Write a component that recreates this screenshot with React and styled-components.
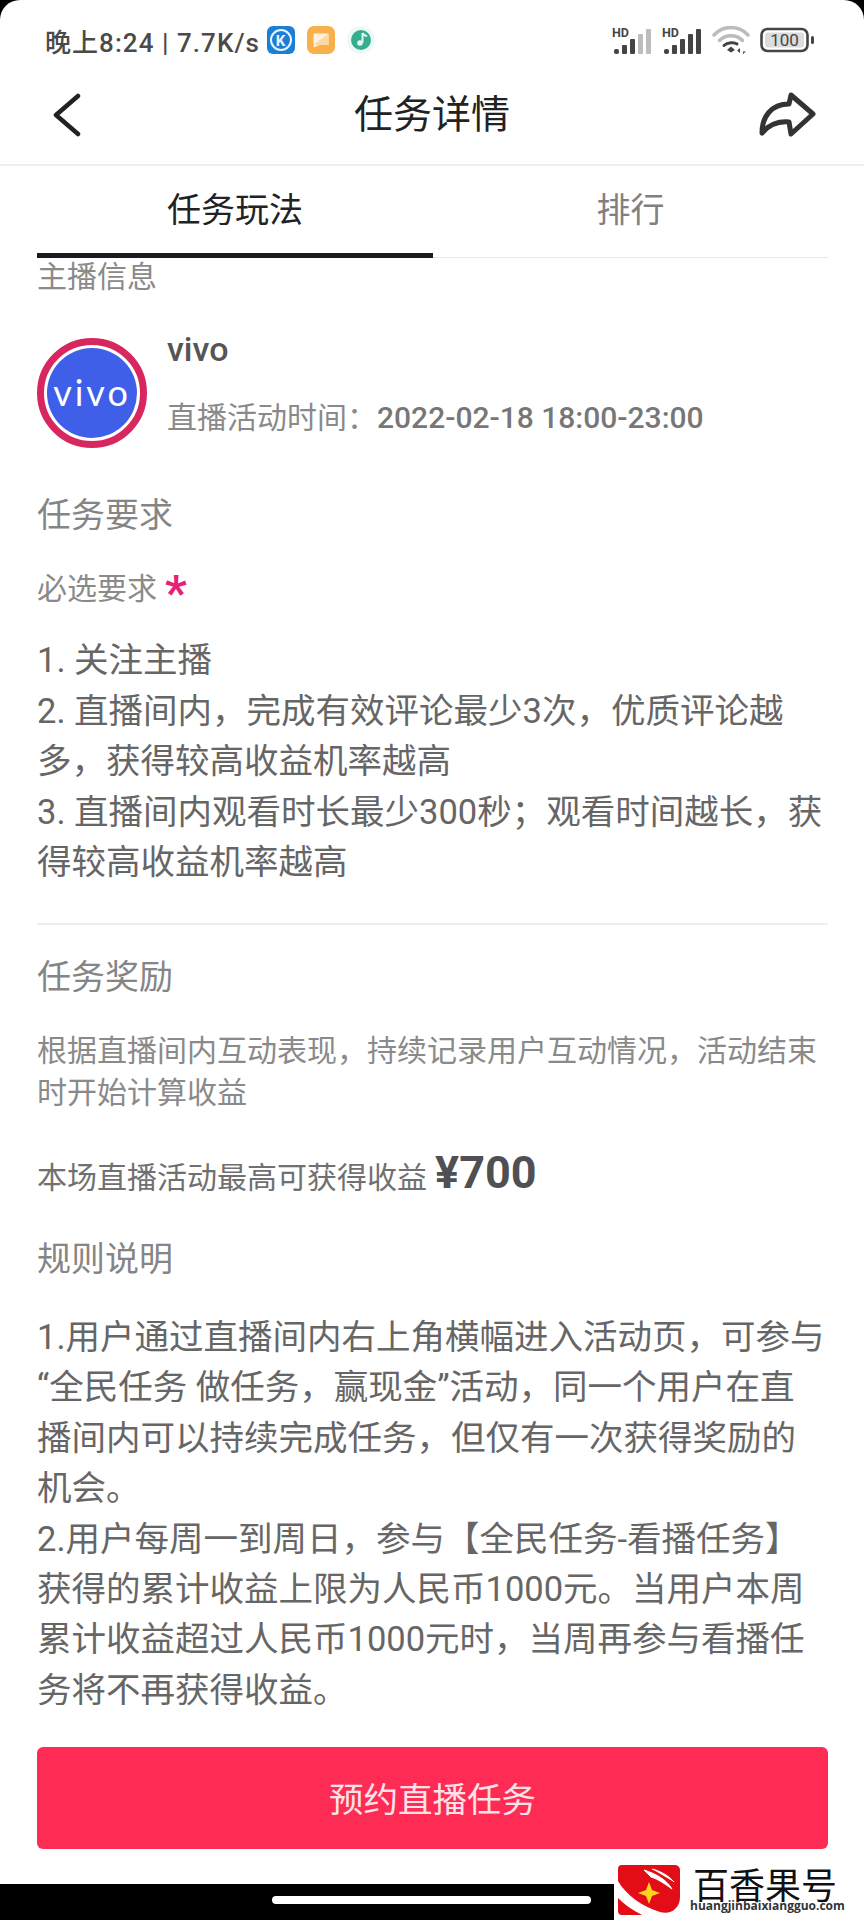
import React from "react";
import styled, { createGlobalStyle } from "styled-components";

const Global = createGlobalStyle`
  html, body { margin: 0; padding: 0; background: #000; }
  body { font-family: Roboto, "Noto Sans CJK SC", sans-serif; }
`;

const Screen = styled.div`
  position: relative;
  width: 864px;
  height: 1920px;
  background: #000;
  overflow: hidden;
  display: flex;
  flex-direction: column;
`;

const Main = styled.div`
  height: 1884px;
  background: #fff;
  border-radius: 20px 20px 0 0;
  display: flex;
  flex-direction: column;
`;

const StatusBar = styled.div`
  height: 80px;
  box-sizing: border-box;
  padding: 0 50px 0 45px;
  display: flex;
  align-items: center;
  justify-content: space-between;
  color: #4a4a4a;
`;

const StatusLeft = styled.div`
  display: flex;
  align-items: center;
  font-size: 26px;
  font-weight: 500;
  letter-spacing: 1.05px;
  white-space: nowrap;
`;

const StatusIcons = styled.div`
  display: flex;
  align-items: center;
  gap: 12px;
  margin-left: 7px;
`;

const StatusRight = styled.div`
  display: flex;
  align-items: center;
  gap: 10px;
`;

const Header = styled.div`
  height: 86px;
  box-sizing: border-box;
  padding: 0 47px 15px;
  display: grid;
  grid-template-columns: 1fr auto 1fr;
  align-items: center;
  border-bottom: 2px solid #eeeeee;
`;

const HeaderEnd = styled.div`
  display: flex;
  justify-content: ${p => (p.$right ? "flex-end" : "flex-start")};
  padding-left: ${p => (p.$right ? 0 : 5)}px;
`;

const Title = styled.div`
  font-size: 39px;
  line-height: 50px;
  color: #222;
`;

const Tabs = styled.div`
  margin: 0 36px 0 37px;
  height: 92px;
  box-sizing: border-box;
  display: grid;
  grid-template-columns: 396px 1fr;
  border-bottom: 1px solid #e8e8e8;
`;

const Tab = styled.div`
  display: flex;
  align-items: center;
  justify-content: center;
  height: 92px;
  box-sizing: border-box;
  padding-bottom: 4px;
  font-size: 34px;
  color: ${p => (p.$active ? "#222" : "#808080")};
  border-bottom: 5px solid ${p => (p.$active ? "#1a1a22" : "transparent")};
`;

const Content = styled.div`
  flex: 1;
  display: flex;
  flex-direction: column;
  padding: 0 36px 0 37px;
`;

const Small = styled.div`
  font-size: 30px;
  line-height: ${p => p.$lh || 40}px;
  margin-top: ${p => p.$mt || 0}px;
  color: ${p => p.$color || "#8a8a8a"};
`;

const Heading = styled.div`
  font-size: 34px;
  line-height: 44px;
  margin-top: ${p => p.$mt}px;
  color: #858585;
`;

const HostRow = styled.div`
  display: flex;
  gap: 20px;
  margin-top: 33px;
`;

const AvatarRing = styled.div`
  width: 110px;
  height: 110px;
  margin-top: 9px;
  box-sizing: border-box;
  border-radius: 50%;
  border: 7px solid #d8275f;
  padding: 3px;
`;

const AvatarDisc = styled.div`
  width: 100%;
  height: 100%;
  border-radius: 50%;
  background: #3f5fe8;
  display: flex;
  align-items: center;
  justify-content: center;
  color: #fff;
  font-family: Lato, sans-serif;
  font-size: 36px;
  font-weight: 400;
  letter-spacing: 3px;
  padding-bottom: 3px;
  box-sizing: border-box;
`;

const HostInfo = styled.div`
  display: flex;
  flex-direction: column;
`;

const HostName = styled.div`
  font-size: 34px;
  font-weight: 500;
  line-height: 40px;
  color: #555;
`;

const HostTime = styled.div`
  font-size: 30px;
  line-height: 40px;
  margin-top: 29px;
  color: #8a8a8a;
  white-space: nowrap;
`;

const HostDate = styled.span`
  font-size: 30px;
  font-weight: 500;
  color: #777;
`;

const Star = styled.span`
  color: #e91e78;
  font-size: 48px;
  font-weight: 700;
  line-height: 30px;
  vertical-align: -10px;
  margin-left: 8px;
`;

const Body = styled.div`
  font-size: 34.5px;
  line-height: ${p => p.$lh}px;
  margin-top: ${p => p.$mt}px;
  color: #666;
`;

const Divider = styled.div`
  height: 2px;
  margin-top: 35px;
  background: #eeeeee;
`;

const Reward = styled.div`
  height: 60px;
  margin-top: 31px;
  display: flex;
  align-items: center;
  font-size: 30px;
  color: #707070;
`;

const Amount = styled.span`
  font-size: 45px;
  font-weight: 700;
  color: #505054;
  margin-left: 8px;
  padding-bottom: 4px;
`;

const Action = styled.div`
  height: 102px;
  margin-top: 32px;
  flex: none;
  box-sizing: border-box;
  padding-bottom: 3px;
  border-radius: 6px;
  background: #fe2c55;
  color: #fde3e8;
  font-size: 34.5px;
  display: flex;
  align-items: center;
  justify-content: center;
`;

const NavBar = styled.div`
  height: 36px;
  display: flex;
  align-items: flex-start;
  padding-left: 272px;
`;

const HomeBar = styled.div`
  margin-top: 12px;
  width: 319px;
  height: 8px;
  border-radius: 4px;
  background: #fff;
`;

const Watermark = styled.div`
  position: absolute;
  right: 0;
  bottom: 0;
  width: 250px;
  height: 58px;
  background: #fff;
  display: flex;
  gap: 10px;
  padding: 3px 0 0 4px;
  box-sizing: border-box;
`;

const MarkText = styled.div`
  display: flex;
  flex-direction: column;
  align-items: flex-start;
`;

const MarkName = styled.div`
  font-size: 36px;
  line-height: 32px;
  margin: 2px 0 0 3px;
  color: #111;
  font-family: "Noto Sans CJK SC", sans-serif;
  white-space: nowrap;
`;

const MarkUrl = styled.div`
  font-family: "Open Sans", sans-serif;
  font-weight: 700;
  font-size: 12px;
  line-height: 14px;
  color: #333;
  white-space: nowrap;
`;

const LogoSvg = styled.svg`
  flex: none;
`;

const KugouIcon = () => (
  <svg width="28" height="28" viewBox="0 0 28 28">
    <rect width="28" height="28" rx="6" fill="#1c7fd6" />
    <circle cx="14" cy="14" r="10" fill="none" stroke="#e9f4fd" strokeWidth="2" />
    <text x="14" y="19.5" textAnchor="middle" fontFamily="Roboto" fontWeight="700" fontSize="15" fill="#e9f4fd">K</text>
  </svg>
);

const NoteIcon = () => (
  <svg width="28" height="28" viewBox="0 0 28 28">
    <rect width="28" height="28" rx="7" fill="#f9b04a" />
    <path d="M6.5 7.5h15v11.5h-9l-6 2.5z" fill="#fdf2dd" />
    <path d="M21.5 7.5v11.5h-15z" fill="#fbd9a0" />
  </svg>
);

const MusicIcon = () => (
  <svg width="28" height="28" viewBox="0 0 28 28">
    <circle cx="14" cy="14" r="14" fill="#eef8f6" />
    <circle cx="14" cy="14" r="10" fill="#35ae8f" />
    <path d="M15.5 7v9.5" stroke="#e9f7f3" strokeWidth="2" />
    <circle cx="13" cy="17" r="2.8" fill="#e9f7f3" />
    <path d="M15.5 7c1 2.4 3 2.6 4.5 3.4" stroke="#e9f7f3" strokeWidth="2" fill="none" />
  </svg>
);

const Signal = ({ weak }) => (
  <svg width="40" height="30" viewBox="0 0 40 30">
    <text x="0" y="12" fontFamily="Roboto" fontWeight="700" fontSize="12.5" fill="#444">HD</text>
    <rect x="2" y="24" width="5" height="5" rx="2" fill="#444" />
    <rect x="10" y="20" width="5" height="9" rx="1" fill="#444" />
    <rect x="18" y="14" width="5" height="15" rx="1" fill="#444" />
    <rect x="26" y="9" width="5" height="20" rx="1" fill={weak ? "#bdbdbd" : "#444"} />
    <rect x="34" y="4" width="5" height="25" rx="1" fill={weak ? "#bdbdbd" : "#444"} />
  </svg>
);

const Wifi = () => (
  <svg width="38" height="30" viewBox="0 0 38 30" fill="none" strokeLinecap="round">
    <path d="M2 10C11 0 27 0 36 10" stroke="#bcbcbc" strokeWidth="3.5" />
    <path d="M7.5 15.5C13.5 9 24.5 9 30.5 15.5" stroke="#bcbcbc" strokeWidth="3.5" />
    <path d="M12 20.5C15.5 17 22.5 17 25 19" stroke="#444" strokeWidth="3" />
    <path d="M15 25l4-3.5 4 3.5-4 2.5z" fill="#444" />
    <path d="M28 23l-3 2.5 3 2.5zM31 21v8l3-2.500-3 0" fill="#444" />
  </svg>
);

const Battery = () => (
  <svg width="54" height="26" viewBox="0 0 54 26">
    <rect x="1.500" y="2" width="46" height="22" rx="6" fill="none" stroke="#444" strokeWidth="2.600" />
    <rect x="5" y="5.500" width="39" height="15" rx="3" fill="#dcdcdc" />
    <rect x="51" y="9" width="3" height="8" rx="1.500" fill="#444" />
    <text x="24.500" y="19" textAnchor="middle" fontFamily="Roboto" fontSize="17" fill="#444">100</text>
  </svg>
);

const BackIcon = () => (
  <svg width="30" height="44" viewBox="0 0 30 44" fill="none">
    <path d="M26 3 4 22l22 19" stroke="#222" strokeWidth="4.500" strokeLinecap="round" strokeLinejoin="round" />
  </svg>
);

const ShareIcon = () => (
  <svg width="60" height="48" viewBox="0 0 60 48" fill="none">
    <path d="M34 4 56 23 34 43 32 31C20 30 11 35 5 42 5 26 14 13 32 13Z" stroke="#333" strokeWidth="5" strokeLinejoin="round" />
  </svg>
);

const LogoMark = () => (
  <LogoSvg width="62" height="50" viewBox="0 0 62 50">
    <path d="M4 0H57a5 5 0 0 1 5 5V32C62 44 52 50 42 47 25 42 8 30 0 16V4a4 4 0 0 1 4-4Z" fill="#e30d17" />
    <path d="M0 33C6 39 14 45 24 50H4a4 4 0 0 1-4-4Z" fill="#e30d17" />
    <path d="M31 19 34 27 42 30 34 33 31 41 28 33 20 30 28 27Z" fill="#fdd31c" transform="translate(0 -2)" />
    <path d="M26 5C38 9 48 14 54 24 47 19 40 14 33 12ZM34 4C42 6 50 10 56 17" fill="#fff" stroke="#fff" strokeWidth="1" />
  </LogoSvg>
);

export default function App() {
  return (
    <>
      <Global />
      <Screen>
        <Main>
          <StatusBar>
            <StatusLeft>
              晚上8:24 | 7.7K/s
              <StatusIcons>
                <KugouIcon />
                <NoteIcon />
                <MusicIcon />
              </StatusIcons>
            </StatusLeft>
            <StatusRight>
              <Signal weak />
              <Signal />
              <Wifi />
              <Battery />
            </StatusRight>
          </StatusBar>
          <Header>
            <HeaderEnd>
              <BackIcon />
            </HeaderEnd>
            <Title>任务详情</Title>
            <HeaderEnd $right>
              <ShareIcon />
            </HeaderEnd>
          </Header>
          <Tabs>
            <Tab $active>任务玩法</Tab>
            <Tab>排行</Tab>
          </Tabs>
          <Content>
            <Small $lh={38}>主播信息</Small>
            <HostRow>
              <AvatarRing>
                <AvatarDisc>vivo</AvatarDisc>
              </AvatarRing>
              <HostInfo>
                <HostName>vivo</HostName>
                <HostTime>
                  直播活动时间：<HostDate>2022-02-18 18:00-23:00</HostDate>
                </HostTime>
              </HostInfo>
            </HostRow>
            <Heading $mt={45}>任务要求</Heading>
            <Small $mt={32}>
              必选要求<Star>*</Star>
            </Small>
            <Body $lh={50.600} $mt={26}>
              1. 关注主播
              <br />
              2. 直播间内，完成有效评论最少3次，优质评论越多，获得较高收益机率越高
              <br />
              3. 直播间内观看时长最少300秒；观看时间越长，获得较高收益机率越高
            </Body>
            <Divider />
            <Heading $mt={30}>任务奖励</Heading>
            <Small $lh={42} $mt={31}>
              根据直播间内互动表现，持续记录用户互动情况，活动结束时开始计算收益
            </Small>
            <Reward>
              本场直播活动最高可获得收益<Amount>¥700</Amount>
            </Reward>
            <Heading $mt={32}>规则说明</Heading>
            <Body $lh={50.400} $mt={31}>
              1.用户通过直播间内右上角横幅进入活动页，可参与
              <br />
              “全民任务 做任务，赢现金”活动，同一个用户在直播间内可以持续完成任务，但仅有一次获得奖励的机会。
              <br />
              2.用户每周一到周日，参与【全民任务-看播任务】获得的累计收益上限为人民币1000元。当用户本周累计收益超过人民币1000元时，当周再参与看播任务将不再获得收益。
            </Body>
            <Action>预约直播任务</Action>
          </Content>
        </Main>
        <NavBar>
          <HomeBar />
        </NavBar>
        <Watermark>
          <LogoMark />
          <MarkText>
            <MarkName>百香果号</MarkName>
            <MarkUrl>huangjinbaixiangguo.com</MarkUrl>
          </MarkText>
        </Watermark>
      </Screen>
    </>
  );
}
